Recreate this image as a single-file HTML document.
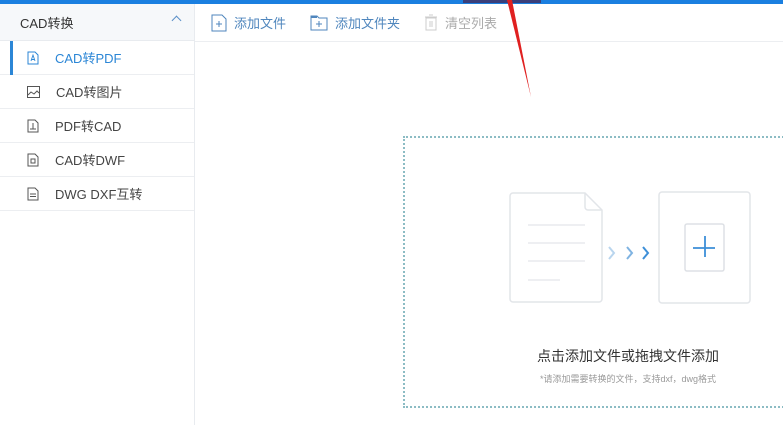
<!DOCTYPE html>
<html><head><meta charset="utf-8"><style>
*{margin:0;padding:0;box-sizing:border-box}
body{width:783px;height:425px;overflow:hidden;background:#fff;font-family:"Liberation Sans","Noto Sans CJK SC",sans-serif;position:relative;color:#333}
.top{position:absolute;left:0;top:0;width:783px;height:4px;background:#1a7fe0}
.topdark{position:absolute;left:463px;top:0;width:78px;height:3px;background:#3a3f7a}
.side{position:absolute;left:0;top:4px;width:195px;height:421px;border-right:1px solid #e8ebef;background:#fff}
.sh{height:37px;background:#f6f8fa;border-bottom:1px solid #e8ebef;display:flex;align-items:center;padding-left:20px;font-size:13px;color:#333;position:relative}
.sh .car{position:absolute;right:14px;top:13px;width:7px;height:7px;border-left:1.5px solid #5a8fc8;border-top:1.5px solid #5a8fc8;transform:rotate(45deg)}
.it{height:34px;border-bottom:1px solid #eceef1;display:flex;align-items:center;padding-left:27px;font-size:13px;color:#444;position:relative}
.it svg{margin-right:16px}
.it.act{color:#2b86d6}
.it.act:before{content:"";position:absolute;left:10px;top:0;width:3px;height:34px;background:#2b86d6}
.tb{position:absolute;left:195px;top:4px;width:588px;height:38px;border-bottom:1px solid #eceef1;display:flex;align-items:center;font-size:13px}
.b{display:flex;align-items:center;color:#4f86bd;margin-left:16px}
.b svg{margin-right:7px}
.drop{position:absolute;left:403px;top:136px;width:400px;height:272px;border:2px dotted #8cbcc4}
</style></head><body>
<div class="top"></div><div class="topdark"></div>
<div class="side">
<div class="sh">CAD转换<span class="car"></span></div>
<div class="it act"><svg width="12" height="14" viewBox="0 0 12 14"><path d="M1 1h7l3 3v9H1z" fill="none" stroke="#2b86d6"/><path d="M4 10l2-6 2 6M4.5 8.5h3" fill="none" stroke="#2b86d6" stroke-width=".9"/></svg>CAD转PDF</div>
<div class="it"><svg width="13" height="12" viewBox="0 0 13 12"><rect x=".5" y=".5" width="12" height="11" fill="none" stroke="#555"/><path d="M1 9l3-3 3 2 3-3 2 2" fill="none" stroke="#555"/></svg>CAD转图片</div>
<div class="it"><svg width="12" height="14" viewBox="0 0 12 14"><path d="M1 1h7l3 3v9H1z" fill="none" stroke="#555"/><path d="M6 4v6M3 10h6" stroke="#555"/></svg>PDF转CAD</div>
<div class="it"><svg width="12" height="14" viewBox="0 0 12 14"><path d="M1 1h7l3 3v9H1z" fill="none" stroke="#555"/><rect x="4" y="6" width="4" height="4" fill="none" stroke="#555"/></svg>CAD转DWF</div>
<div class="it"><svg width="12" height="14" viewBox="0 0 12 14"><path d="M1 1h7l3 3v9H1z" fill="none" stroke="#555"/><path d="M3 7h6M3 9.5h6" stroke="#555"/></svg>DWG DXF互转</div>
</div>
<div class="tb">
<div class="b"><svg width="16" height="18" viewBox="0 0 16 18"><path d="M1 1h10l4 4v12H1z" fill="none" stroke="#4f86bd"/><path d="M8 7v6M5 10h6" stroke="#4f86bd"/></svg>添加文件</div>
<div class="b" style="margin-left:24px"><svg width="18" height="16" viewBox="0 0 18 16"><path d="M1 1h6l2 2h8v12H1z" fill="none" stroke="#4f86bd"/><path d="M1 1h6v2H1z" fill="#4f86bd"/><path d="M9 6v6M6 9h6" stroke="#4f86bd"/></svg>添加文件夹</div>
<div class="b" style="margin-left:24px;color:#aaa"><svg width="14" height="17" viewBox="0 0 14 17"><path d="M1 3h12M5 1h4" stroke="#ccc"/><rect x="2" y="4" width="10" height="12" fill="none" stroke="#ccc"/><path d="M6 7v6M8 7v6" stroke="#ccc"/></svg>清空列表</div>
</div>
<svg style="position:absolute;left:0;top:0" width="783" height="425">
<polygon points="507,0 512,0 531,97" fill="#e02020"/>
<path d="M513 193h72l17 17v89a3 3 0 0 1-3 3h-86a3 3 0 0 1-3-3v-103a3 3 0 0 1 3-3z" fill="#fff" stroke="#e2e5e9" stroke-width="1.5"/>
<path d="M585 193v14a3 3 0 0 0 3 3h14" fill="none" stroke="#e2e5e9" stroke-width="1.5"/>
<path d="M528 225h57M528 243h57M528 261h57M528 280h32" stroke="#e8eaee" stroke-width="1.5"/>
<path d="M609 247l5 6-5 6" fill="none" stroke="#b9d5ee" stroke-width="2"/>
<path d="M627 247l5 6-5 6" fill="none" stroke="#7fb3e2" stroke-width="2"/>
<path d="M643 247l5 6-5 6" fill="none" stroke="#3d8fd8" stroke-width="2"/>
<rect x="659" y="192" width="91" height="111" rx="3" fill="#fff" stroke="#e2e5e9" stroke-width="1.5"/>
<rect x="685" y="224" width="39" height="47" rx="2" fill="#fff" stroke="#dde0e5" stroke-width="1.5"/>
<path d="M705 236v21M693 248h22" stroke="#3d8fd8" stroke-width="1.8"/>
</svg>
<div class="drop"></div>
<div style="position:absolute;left:480px;top:346px;width:296px;text-align:center;font-size:14px;color:#333">点击添加文件或拖拽文件添加</div>
<div style="position:absolute;left:480px;top:372px;width:296px;text-align:center;font-size:9px;color:#999">*请添加需要转换的文件，支持dxf，dwg格式</div>
</body></html>
